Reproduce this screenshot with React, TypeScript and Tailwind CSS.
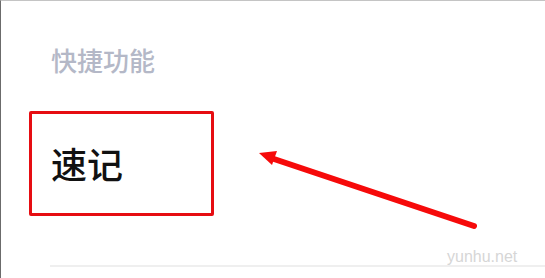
import React from "react";

export default function App() {
  return (
    <div
      className="relative w-[545px] h-[278px] overflow-hidden bg-white border-l border-l-[#6b6b6b] border-t border-t-[#c4c4c4]"
      style={{ fontFamily: '"Noto Sans CJK SC", "Noto Sans", sans-serif' }}
    >
      <div className="flex flex-col">
        <div className="pl-[50px] pt-[44px] h-[110px] text-[26px] leading-[30px] font-medium text-[#b4b8c7]">
          快捷功能
        </div>
        <div className="ml-[28px] w-[185px] h-[105px] border-[3px] border-[#e60d12] rounded-[2px] flex items-center pl-[19px] pb-[2px]">
          <span className="text-[36px] leading-[40px] font-medium text-[#111]">速记</span>
        </div>
        <div className="ml-[49px] mt-[49px] h-[2px] bg-[#efefef]" />
      </div>

      <svg className="absolute left-0 top-0" width="545" height="278" viewBox="0 0 545 278">
        <line x1="473" y1="225" x2="270" y2="157" stroke="#f60a0a" strokeWidth="6" strokeLinecap="round" />
        <polygon points="258,152 276,150 271,164" fill="#f60a0a" />
      </svg>

      <div
        className="absolute left-[446px] top-[247px] text-[16px] leading-[18px] text-[#d6d6d6]"
        style={{ fontFamily: '"Liberation Sans", Arial, sans-serif' }}
      >
        yunhu.net
      </div>
    </div>
  );
}
